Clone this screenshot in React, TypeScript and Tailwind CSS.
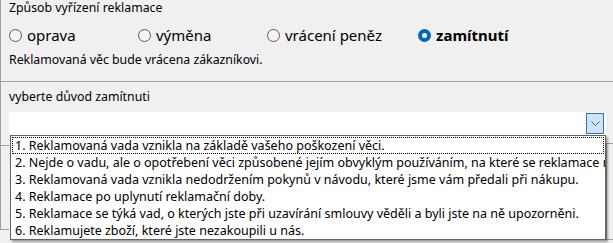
import React from "react";

const font = "font-['Noto_Sans','Open_Sans',sans-serif]";

function Radio({ label, checked, w }: { label: string; checked?: boolean; w: string }) {
  return (
    <div className={`flex items-center ${w}`}>
      {checked ? (
        <span className="w-[13px] h-[13px] rounded-full bg-[#0067c0] flex items-center justify-center shrink-0">
          <span className="w-[5px] h-[5px] rounded-full bg-white" />
        </span>
      ) : (
        <span className="w-[13px] h-[13px] rounded-full border border-[#5a5a5a] bg-[#f4f4f4] shrink-0" />
      )}
      <span className={`ml-[5px] text-[15px] leading-[18px] ${checked ? "font-bold" : ""}`}>{label}</span>
    </div>
  );
}

const items = [
  "1. Reklamovaná vada vznikla na základě vašeho poškození věci.",
  "2. Nejde o vadu, ale o opotřebení věci způsobené jejím obvyklým používáním, na které se reklamace nevztahuje.",
  "3. Reklamovaná vada vznikla nedodržením pokynů v návodu, které jsme vám předali při nákupu.",
  "4. Reklamace po uplynutí reklamační doby.",
  "5. Reklamace se týká vad, o kterých jste při uzavírání smlouvy věděli a byli jste na ně upozorněni.",
  "6. Reklamujete zboží, které jste nezakoupili u nás.",
];

export default function App() {
  return (
    <div className={`relative w-[613px] h-[243px] overflow-hidden bg-[#f0f0f0] text-black ${font}`}>
      {/* underlying frame lines */}
      <div className="absolute left-0 top-0 w-px h-[229px] bg-[#a0a0a0]" />
      <div className="absolute left-0 top-[145px] w-[9px] h-px bg-[#a0a0a0]" />
      <div className="absolute left-0 top-[229px] w-[9px] h-px bg-[#a0a0a0]" />
      <div className="absolute left-[606px] top-[143px] w-px h-[97px] bg-[#a0a0a0]" />
      <div className="absolute left-[606px] top-[143px] w-[7px] h-px bg-[#a0a0a0]" />
      <div className="absolute left-[606px] top-[239px] w-[7px] h-px bg-[#a0a0a0]" />

      {/* top section */}
      <div className="h-[82px] border-b border-[#a0a0a0] pl-[9px]">
        <div className="text-[12.3px] leading-[16px]">Způsob vyřízení reklamace</div>
        <div className="flex mt-[10px]">
          <Radio label="oprava" w="w-[129px]" />
          <Radio label="výměna" w="w-[129px]" />
          <Radio label="vrácení peněz" w="w-[151px]" />
          <Radio label="zamítnutí" checked w="w-[120px]" />
        </div>
        <div className="mt-[8px] text-[12.3px] leading-[16px]">Reklamovaná věc bude vrácena zákazníkovi.</div>
      </div>

      {/* bottom section */}
      <div className="pl-[9px] pt-[7px]">
        <div className="text-[12.3px] leading-[16px]">vyberte důvod zamítnuti</div>
        <div className="mt-[7px] w-[597px] h-[23px] bg-white flex justify-end items-center pr-[2px]">
          <div className="w-[18px] h-[21px] border border-[#2f73b8] bg-[#cce4f7] flex items-center justify-center">
            <svg width="9" height="5" viewBox="0 0 9 5">
              <path d="M0.5 0.5 L4.5 4.5 L8.5 0.5" fill="none" stroke="#606060" strokeWidth="1" />
            </svg>
          </div>
        </div>
      </div>

      {/* dropdown list overlay */}
      <div className="absolute left-[10px] top-[135px] w-[596px] h-[105px] bg-white border border-[#646464] shadow-[2px_2px_2px_rgba(0,0,0,0.35)] overflow-hidden">
        <div className="pt-px pl-px pr-px">
          {items.map((t, i) => (
            <div
              key={i}
              className={`h-[17px] text-[12.5px] whitespace-nowrap ${
                i === 0 ? "border border-dotted border-black leading-[15px] pl-[2px]" : "leading-[17px] pl-[3px]"
              }`}
            >
              {t}
            </div>
          ))}
        </div>
      </div>
    </div>
  );
}
